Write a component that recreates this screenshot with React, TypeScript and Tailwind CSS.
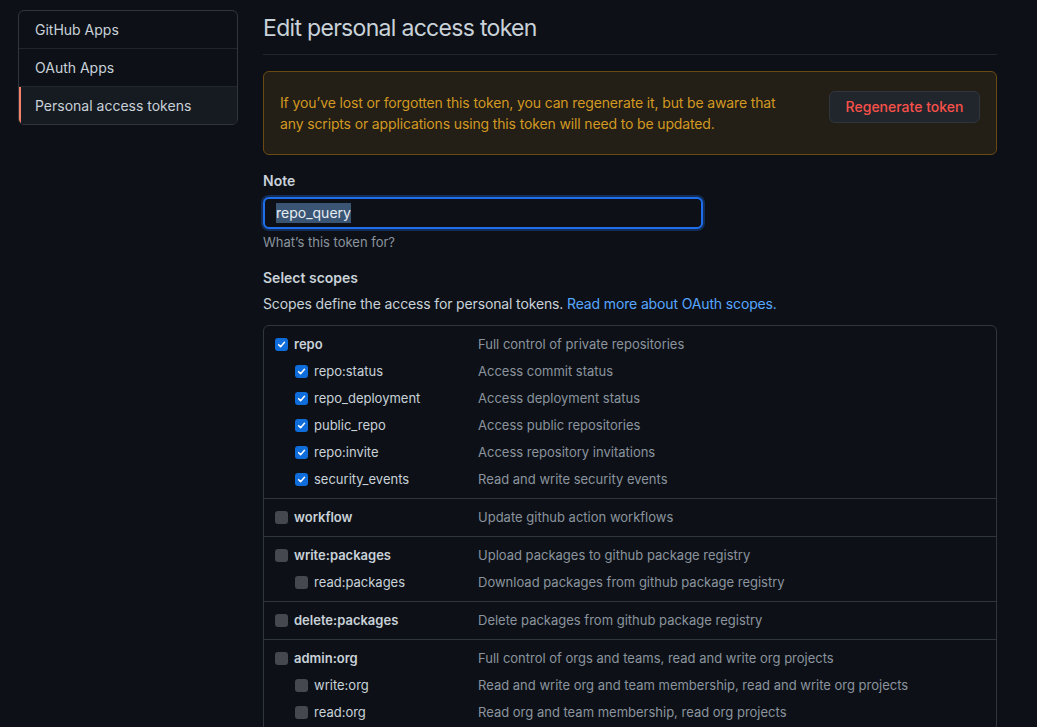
import React from "react";

type Scope = { name: string; desc: string; checked: boolean; children?: Scope[] };

const groups: Scope[] = [
  {
    name: "repo",
    desc: "Full control of private repositories",
    checked: true,
    children: [
      { name: "repo:status", desc: "Access commit status", checked: true },
      { name: "repo_deployment", desc: "Access deployment status", checked: true },
      { name: "public_repo", desc: "Access public repositories", checked: true },
      { name: "repo:invite", desc: "Access repository invitations", checked: true },
      { name: "security_events", desc: "Read and write security events", checked: true },
    ],
  },
  { name: "workflow", desc: "Update github action workflows", checked: false },
  {
    name: "write:packages",
    desc: "Upload packages to github package registry",
    checked: false,
    children: [{ name: "read:packages", desc: "Download packages from github package registry", checked: false }],
  },
  { name: "delete:packages", desc: "Delete packages from github package registry", checked: false },
  {
    name: "admin:org",
    desc: "Full control of orgs and teams, read and write org projects",
    checked: false,
    children: [
      { name: "write:org", desc: "Read and write org and team membership, read and write org projects", checked: false },
      { name: "read:org", desc: "Read org and team membership, read org projects", checked: false },
    ],
  },
];

const Checkbox = ({ checked }: { checked: boolean }) =>
  checked ? (
    <span className="flex h-[13px] w-[13px] shrink-0 items-center justify-center rounded-[3px] bg-[#0f6cdb]">
      <svg width="9" height="9" viewBox="0 0 10 10" fill="none">
        <path d="M1.8 5.2 4 7.4 8.3 2.6" stroke="white" strokeWidth="1.7" strokeLinecap="round" strokeLinejoin="round" />
      </svg>
    </span>
  ) : (
    <span className="h-[13px] w-[13px] shrink-0 rounded-[3px] bg-[#45494f]" />
  );

const Row = ({ scope, sub }: { scope: Scope; sub?: boolean }) => (
  <div className="flex h-5 items-center">
    <div className={`flex w-[203px] items-center gap-[6px] ${sub ? "pl-5" : ""}`}>
      <Checkbox checked={scope.checked} />
      <span className={`text-[#c9d1d9] ${sub ? "" : "font-semibold"}`}>{scope.name}</span>
    </div>
    <span className="text-[#8b949e]">{scope.desc}</span>
  </div>
);

export default function App() {
  return (
    <div
      className="min-h-screen bg-[#0d1117] text-[14px] leading-5 text-[#c9d1d9]"
      style={{ fontFamily: "Inter, 'Noto Sans', sans-serif" }}
    >
      <div className="flex gap-[25px] pl-[18px] pr-[40px] pt-[10px]">
        {/* Sidebar */}
        <nav className="w-[220px] shrink-0 self-start overflow-hidden rounded-md border border-[#30363d]">
          <div className="flex h-[38px] items-center border-b border-[#21262d] px-4">GitHub Apps</div>
          <div className="flex h-[38px] items-center border-b border-[#21262d] px-4">OAuth Apps</div>
          <div className="flex h-[37px] items-center border-l-2 border-[#f78166] bg-[#161b22] pl-[14px]">
            Personal access tokens
          </div>
        </nav>

        {/* Main */}
        <main className="flex-1">
          <div className="border-b border-[#21262d] pb-2">
            <h1 className="text-[23px] leading-9 font-normal tracking-[-0.03em] text-[#c9d1d9]">
              Edit personal access token
            </h1>
          </div>

          <div className="mt-4 flex items-start justify-between rounded-md border border-[#6b4a12] bg-[#231e16] px-4 py-5">
            <p className="leading-[21px] tracking-[-0.01em] text-[#d29922]">
              If you’ve lost or forgotten this token, you can regenerate it, but be aware that
              <br />
              any scripts or applications using this token will need to be updated.
            </p>
            <button className="-mt-px h-[32px] w-[151px] rounded-md border border-[#30363d] bg-[#21262d] font-medium text-[#f85149]">
              Regenerate token
            </button>
          </div>

          <div className="mt-4">
            <label className="block font-semibold">Note</label>
            <div className="mt-[6px] flex h-[32px] w-[440px] items-center rounded-md border-2 border-[#1f6feb] bg-[#0d1117] px-[11px] shadow-[0_0_0_2px_rgba(31,111,235,0.3)]">
              <span className="bg-[#3a5573] text-[#e6edf3]">repo_query</span>
            </div>
            <p className="mt-[3px] text-[13px] text-[#8b949e]">What’s this token for?</p>
          </div>

          <div className="mt-[16px]">
            <h3 className="font-semibold">Select scopes</h3>
            <p className="mt-[6px] tracking-[-0.01em]">
              Scopes define the access for personal tokens.{" "}
              <a className="text-[#58a6ff]">Read more about OAuth scopes.</a>
            </p>
          </div>

          <div className="mt-[11px] rounded-md border border-[#30363d] text-[13px]">
            {groups.map((g, i) => (
              <div
                key={g.name}
                className={`flex flex-col gap-[7px] px-[11px] pt-2 pb-[9px] ${i > 0 ? "border-t border-[#30363d]" : ""}`}
              >
                <Row scope={g} />
                {g.children?.map((c) => <Row key={c.name} scope={c} sub />)}
              </div>
            ))}
          </div>
        </main>
      </div>
    </div>
  );
}
